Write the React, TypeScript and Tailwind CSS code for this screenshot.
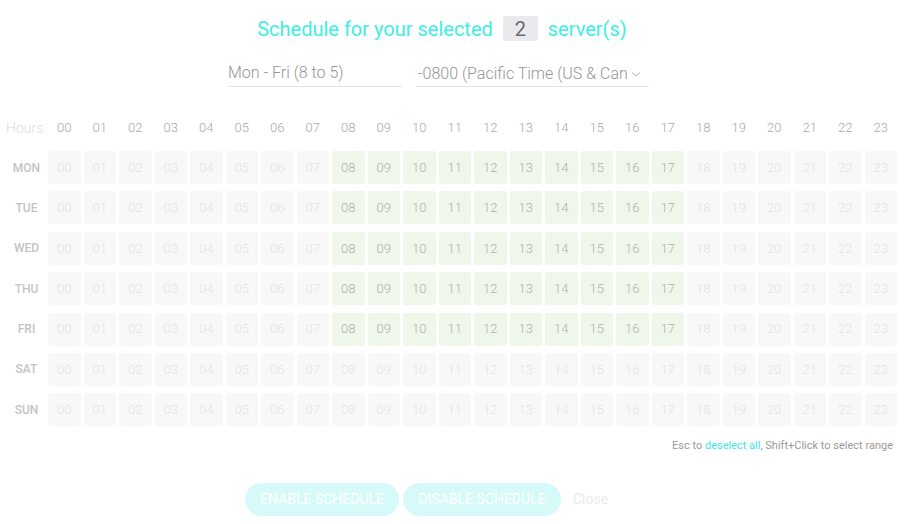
const days = ["MON", "TUE", "WED", "THU", "FRI", "SAT", "SUN"]
const hours = Array.from({ length: 24 }, (_, i) => String(i).padStart(2, "0"))

function isActive(day: number, hour: number) {
  return day < 5 && hour >= 8 && hour <= 17
}

export default function App() {
  return (
    <div className="w-[910px] h-[524px] bg-white overflow-hidden font-['Roboto',sans-serif]">
      {/* Title */}
      <div className="flex items-center justify-center pt-[16px] pr-[26px] h-[41px] text-[20px] text-[#3eeee6]">
        <span>Schedule for your selected</span>
        <span className="mx-[10px] w-[35px] h-[25px] flex items-center justify-center rounded-[2px] bg-[#e9eaed] text-[#6b6b6b]">
          2
        </span>
        <span>server(s)</span>
      </div>

      {/* Preset + timezone */}
      <div className="flex justify-center gap-[14px] mt-[20px] pr-[33px]">
        <div className="w-[174px] h-[26px] border-b border-[#e4e4e4] text-[16px] text-[#959595] font-light leading-[24px]">
          Mon - Fri (8 to 5)
        </div>
        <div className="w-[233px] h-[26px] border-b border-[#e4e4e4] flex items-center text-[16px] text-[#959595] font-light leading-[24px]">
          <span className="flex-1 overflow-hidden whitespace-nowrap pl-[2px]">-0800 (Pacific Time (US &amp; Canada))</span>
          <svg width="10" height="10" viewBox="0 0 10 10" className="ml-[4px] mr-[8px]">
            <path d="M1 3.5 L5 7 L9 3.5" fill="none" stroke="#b0b0b0" strokeWidth="1" />
          </svg>
        </div>
      </div>

      {/* Grid */}
      <div className="mt-[31px] ml-[5px] w-[895px]">
        <div className="flex items-center h-[20px]">
          <div className="w-[43px] pl-[1px] text-[14px] text-[#dedede] font-light">Hours</div>
          <div className="grid grid-cols-[repeat(24,32.5px)] gap-x-[3px]">
            {hours.map((h) => (
              <div key={h} className="text-center text-[13px] text-[#a9a9a9] font-light">
                {h}
              </div>
            ))}
          </div>
        </div>
        <div className="mt-[13px] flex flex-col gap-y-[7.4px]">
          {days.map((d, di) => (
            <div key={d} className="flex items-center h-[33px]">
              <div className="w-[43px] text-center text-[12px] text-[#c4c4c4] font-medium">{d}</div>
              <div className="grid grid-cols-[repeat(24,32.5px)] gap-x-[3px]">
                {hours.map((h, hi) =>
                  isActive(di, hi) ? (
                    <div
                      key={h}
                      className="h-[33px] rounded-[2px] bg-[#eef7ea] flex items-center justify-center text-[13px] text-[#b0b0b0] font-light"
                    >
                      {h}
                    </div>
                  ) : (
                    <div
                      key={h}
                      className="h-[33px] rounded-[2px] bg-[#f8f8f8] flex items-center justify-center text-[13px] text-[#e4e4e4] font-light"
                    >
                      {h}
                    </div>
                  )
                )}
              </div>
            </div>
          ))}
        </div>
      </div>

      {/* Hint */}
      <div className="mt-[12px] pr-[17px] text-right text-[11px] text-[#9a9a9a]">
        Esc to <span className="text-[#3ee8e6]">deselect all</span>, Shift+Click to select range
      </div>

      {/* Actions */}
      <div className="flex items-center mt-[28px] ml-[245px] gap-[4px]">
        <button className="h-[33px] w-[154px] rounded-full bg-[#d6fafa] text-white text-[14px] uppercase">
          Enable Schedule
        </button>
        <button className="h-[33px] w-[158px] rounded-full bg-[#d6fafa] text-white text-[14px] uppercase">
          Disable Schedule
        </button>
        <button className="ml-[8px] text-[14px] text-[#ececec]">Close</button>
      </div>
    </div>
  )
}
